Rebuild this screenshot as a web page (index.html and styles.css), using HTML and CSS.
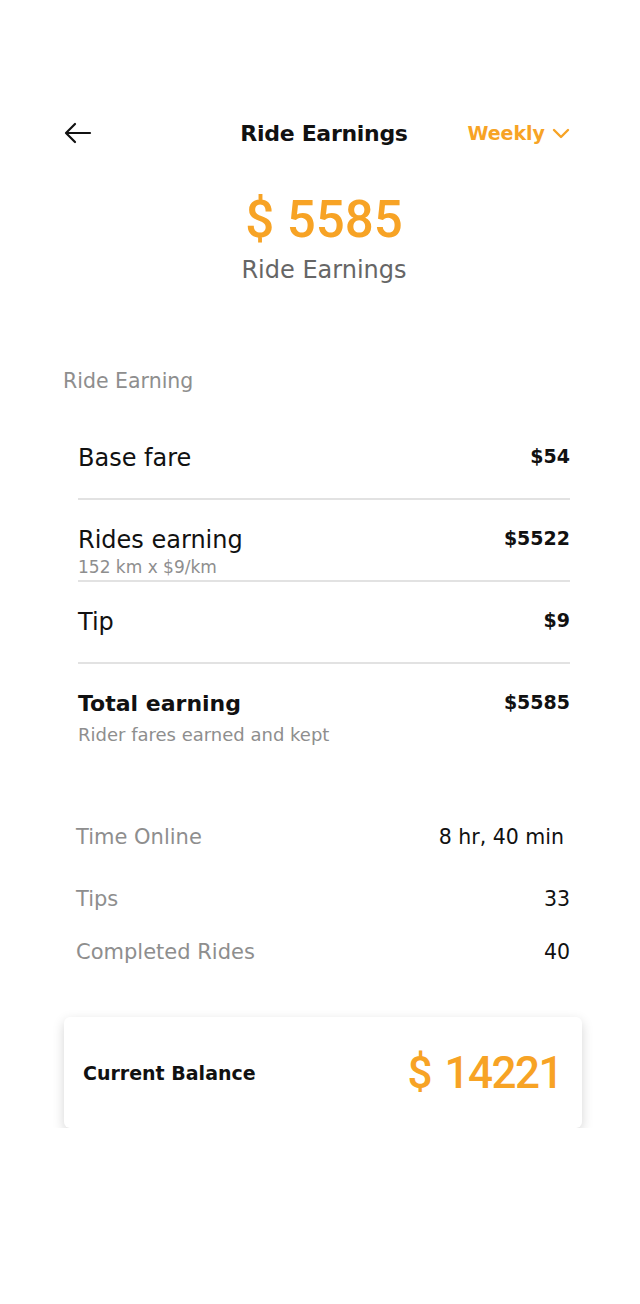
FILE: index.html
```html
<!DOCTYPE html>
<html lang="en">
<head>
  <meta charset="UTF-8">
  <title>Ride Earnings</title>
  <link rel="stylesheet" href="styles.css">
</head>
<body>

<div class="pantalla">
  <div class="cabecera">
    <span class="volver">
      <svg width="28" height="24" viewBox="0 0 28 24" fill="none" stroke="#111" stroke-width="2.2" stroke-linecap="round" stroke-linejoin="round">
        <path d="M26 12H3"/>
        <path d="M11 3L2 12L11 21"/>
      </svg>
    </span>
    <h1>Ride Earnings</h1>
    <span class="periodo">Weekly
      <svg width="18" height="12" viewBox="0 0 18 12" fill="none" stroke="#f7a325" stroke-width="2.4" stroke-linecap="round" stroke-linejoin="round">
        <path d="M2 3L9 10L16 3"/>
      </svg>
    </span>
  </div>

  <div class="total">
    <div class="monto">$ 5585</div>
    <div class="monto-texto">Ride Earnings</div>
  </div>

  <div class="etiqueta">Ride Earning</div>

  <div class="lista">
    <div class="fila">
      <div>
        <div class="nombre">Base fare</div>
      </div>
      <div class="valor">$54</div>
    </div>
    <div class="fila">
      <div>
        <div class="nombre">Rides earning</div>
        <div class="detalle">152 km x $9/km</div>
      </div>
      <div class="valor">$5522</div>
    </div>
    <div class="fila">
      <div>
        <div class="nombre">Tip</div>
      </div>
      <div class="valor">$9</div>
    </div>
    <div class="fila final">
      <div>
        <div class="nombre fuerte">Total earning</div>
        <div class="detalle largo">Rider fares earned and kept</div>
      </div>
      <div class="valor">$5585</div>
    </div>
  </div>

  <div class="resumen">
    <div class="dato primero">
      <span>Time Online</span>
      <span class="cifra corta">8 hr, 40 min</span>
    </div>
    <div class="dato">
      <span>Tips</span>
      <span class="cifra">33</span>
    </div>
    <div class="dato">
      <span>Completed Rides</span>
      <span class="cifra">40</span>
    </div>
  </div>

  <div class="saldo">
    <span class="saldo-texto">Current Balance</span>
    <span class="saldo-monto">$ 14221</span>
  </div>
</div>

</body>
</html>
```

FILE: styles.css
```css
body {
  margin: 0;
  background: white;
  font-family: "DejaVu Sans", sans-serif;
  color: #111;
}
.pantalla {
  width: 640px;
  padding-top: 110px;
}
.cabecera {
  display: flex;
  align-items: center;
  justify-content: space-between;
  height: 46px;
  padding: 0 70px 0 64px;
}
.volver {
  display: flex;
  width: 124px;
}
h1 {
  margin: 0;
  font-size: 22px;
  font-weight: 700;
  letter-spacing: -0.3px;
  color: #111;
}
.periodo {
  display: flex;
  align-items: center;
  justify-content: flex-end;
  gap: 7px;
  width: 110px;
  font-size: 19px;
  font-weight: 700;
  color: #f7a325;
}
.total {
  text-align: center;
  margin-top: 34px;
  padding-left: 8px;
}
.monto {
  font-family: Roboto, sans-serif;
  font-weight: 500;
  font-size: 51px;
  line-height: 60px;
  color: #f7a325;
}
.monto-texto {
  margin-top: 5px;
  font-size: 24px;
  line-height: 30px;
  color: #666;
}
.etiqueta {
  margin: 83px 0 0 63px;
  font-size: 20.5px;
  line-height: 26px;
  color: #8e8e8e;
}
.lista {
  margin: 24px 70px 0 78px;
}
.fila {
  display: flex;
  justify-content: space-between;
  align-items: flex-start;
  box-sizing: border-box;
  height: 82px;
  padding-top: 26px;
  border-bottom: 2px solid #e2e2e2;
}
.fila.final {
  border-bottom: none;
}
.nombre {
  font-size: 24px;
  line-height: 28px;
}
.nombre.fuerte {
  font-size: 22px;
  font-weight: 700;
}
.valor {
  font-size: 19px;
  font-weight: 700;
  line-height: 24px;
}
.detalle {
  margin-top: 4px;
  font-size: 17px;
  line-height: 18px;
  color: #8e8e8e;
}
.detalle.largo {
  margin-top: 6px;
  font-size: 18px;
  line-height: 22px;
}
.resumen {
  margin: 77px 70px 0 76px;
}
.dato {
  display: flex;
  justify-content: space-between;
  font-size: 21px;
  line-height: 28px;
  color: #8e8e8e;
  margin-top: 25px;
}
.dato.primero {
  margin-top: 0;
  margin-bottom: 34px;
}
.cifra {
  color: #111;
  font-size: 20.5px;
}
.cifra.corta {
  padding-right: 6px;
}
.saldo {
  display: flex;
  align-items: center;
  justify-content: space-between;
  box-sizing: border-box;
  width: 518px;
  height: 111px;
  margin: 51px 0 0 64px;
  padding: 0 20px 0 19px;
  border-radius: 6px;
  background: white;
  box-shadow: 0 4px 12px rgba(0,0,0,0.17);
}
.saldo-texto {
  font-size: 19px;
  font-weight: 700;
}
.saldo-monto {
  font-family: Roboto, sans-serif;
  font-weight: 500;
  font-size: 44px;
  letter-spacing: -1.5px;
  word-spacing: 4px;
  color: #f7a325;
}
```
